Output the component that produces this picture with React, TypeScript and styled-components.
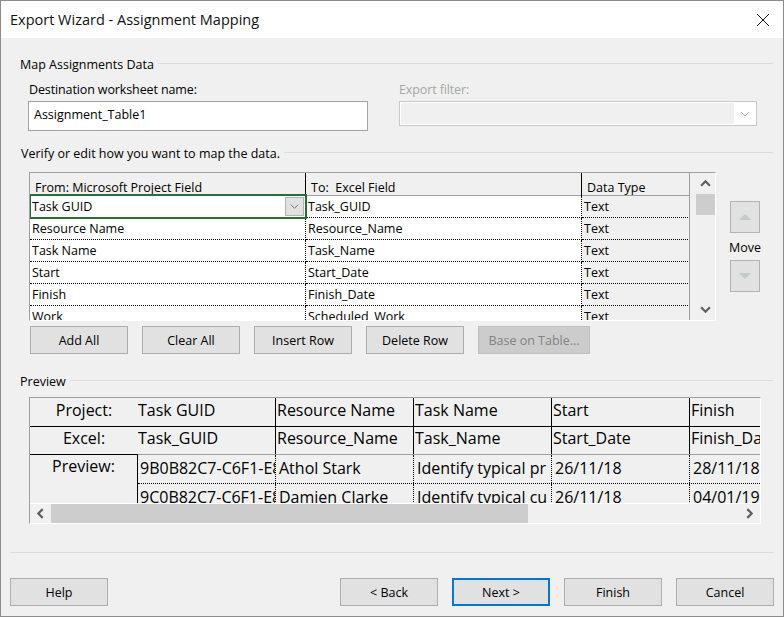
import React from "react";
import styled, { createGlobalStyle } from "styled-components";

const GlobalStyle = createGlobalStyle`
  html, body {
    margin: 0;
    padding: 0;
    background: #f0f0f0;
  }
  * {
    box-sizing: border-box;
  }
`;

const Window = styled.div`
  width: 784px;
  height: 617px;
  border: 1px solid #8c8c8c;
  background: #f0f0f0;
  color: #000;
  font-family: "Open Sans", "Noto Sans", sans-serif;
  font-size: 12.5px;
  overflow: hidden;
  display: flex;
  flex-direction: column;
`;

const TitleBar = styled.div`
  height: 37px;
  flex: none;
  background: #fff;
  display: flex;
  align-items: center;
  justify-content: space-between;
  padding: 0 14px 0 9px;
  font-size: 14.5px;
  color: #111;
`;

const Body = styled.div`
  flex: 1;
  display: flex;
  flex-direction: column;
  padding: 0 9px 0 9px;
`;

const GroupHead = styled.div<{ $top: number; $left?: number }>`
  display: flex;
  align-items: center;
  gap: 4px;
  height: 16px;
  margin: ${(p) => p.$top}px 1px 0 ${(p) => p.$left ?? 10}px;
  white-space: nowrap;
  &::after {
    content: "";
    flex: 1;
    height: 1px;
    margin-top: -2px;
    background: #dcdcdc;
  }
`;

const FieldRow = styled.div`
  display: flex;
  margin: 10px 0 0 18px;
`;

const Field = styled.div<{ $width: number; $left?: number; $disabled?: boolean }>`
  width: ${(p) => p.$width}px;
  margin-left: ${(p) => p.$left ?? 0}px;
  color: ${(p) => (p.$disabled ? "#a6a6a6" : "inherit")};
`;

const FieldLabel = styled.div<{ $flush?: boolean }>`
  height: 16px;
  line-height: 16px;
  padding-left: ${(p) => (p.$flush ? 0 : 1)}px;
  margin-bottom: 3px;
  letter-spacing: -0.12px;
`;

const TextInput = styled.div`
  height: 30px;
  background: #fff;
  border: 1px solid #a3a3a3;
  padding-left: 5px;
  line-height: 26px;
`;

const DisabledSelect = styled.div`
  height: 25px;
  margin-top: 1px;
  background: #fff;
  border: 1px solid #c8c8c8;
  padding: 1px 0 1px 1px;
  display: flex;
  align-items: center;
`;

const DisabledSelectFill = styled.div`
  flex: 1;
  height: 100%;
  background: #f0f0f0;
`;

const DisabledSelectArrow = styled.div`
  width: 22px;
  display: flex;
  justify-content: center;
  color: #b8b8b8;
`;

const MappingRow = styled.div`
  display: flex;
  margin: 11px 0 0 19px;
`;

const MappingGrid = styled.div`
  width: 687px;
  height: 149px;
  flex: none;
  display: flex;
  border-top: 1px solid #a0a0a0;
  border-left: 1px solid #a0a0a0;
  border-right: 1px solid #fff;
  border-bottom: 1px solid #fff;
`;

const MappingTable = styled.div`
  width: 660px;
  flex: none;
  border-right: 1px solid #a0a0a0;
  overflow: hidden;
`;

const MappingHeader = styled.div`
  display: grid;
  grid-template-columns: 276px 276px 108px;
  height: 23px;
  border-bottom: 1px solid #a0a0a0;
  margin-right: -1px;
`;

const HeaderCell = styled.div`
  border-right: 1px solid #000;
  padding: 6px 0 0 5px;
  line-height: 17px;
  white-space: pre;
`;

const MappingBody = styled.div`
  height: 127px;
  margin-top: -2px;
  padding-top: 2px;
  overflow: hidden;
  position: relative;
`;

const MappingLine = styled.div`
  display: grid;
  grid-template-columns: 276px 276px 108px;
  height: 22px;
`;

const MappingCell = styled.div<{ $shaded?: boolean; $last?: boolean }>`
  background: ${(p) => (p.$shaded ? "#f0f0f0" : "#fff")};
  border-bottom: 1px dotted #000;
  border-right: ${(p) => (p.$last ? "0" : "1px dotted #000")};
  padding-left: 2px;
  line-height: 21px;
  white-space: nowrap;
  overflow: hidden;
`;

const SelectedCell = styled.div`
  position: relative;
  background: #fff;
  padding: 0 2px 1px 2px;
  display: flex;
  align-items: center;
  justify-content: space-between;
  white-space: nowrap;
  &::after {
    content: "";
    position: absolute;
    top: -2px;
    left: 0;
    right: -1px;
    bottom: -1px;
    border: 2px solid #2b6e35;
    border-left-width: 1px;
    pointer-events: none;
  }
`;

const ComboButton = styled.div`
  width: 19px;
  height: 19px;
  background: #e1e1e1;
  border: 1px solid #b4b4b4;
  display: flex;
  align-items: center;
  justify-content: center;
  color: #666;
`;

const VScroll = styled.div`
  flex: 1;
  display: flex;
  flex-direction: column;
  padding-left: 6px;
`;

const ArrowSlot = styled.div<{ $height: number; $width?: number }>`
  height: ${(p) => p.$height}px;
  width: ${(p) => (p.$width ? `${p.$width}px` : "auto")};
  flex: none;
  display: flex;
  align-items: center;
  justify-content: center;
  color: #605e60;
`;

const VThumb = styled.div`
  height: 21px;
  flex: none;
  background: #cdcdcd;
`;

const VTrack = styled.div`
  flex: 1;
`;

const MoveColumn = styled.div`
  width: 34px;
  margin: 29px 0 0 14px;
  display: flex;
  flex-direction: column;
`;

const MoveButton = styled.div`
  width: 30px;
  height: 32px;
  background: #e1e1e1;
  border: 1px solid #b4b4b4;
  display: flex;
  align-items: center;
  justify-content: center;
  color: #c2cbc8;
`;

const MoveLabel = styled.div`
  height: 27px;
  line-height: 29px;
  margin-left: -1px;
  white-space: nowrap;
`;

const ActionRow = styled.div`
  display: flex;
  gap: 14px;
  margin: 5px 0 0 20px;
`;

const PushButton = styled.div<{ $wide?: boolean; $disabled?: boolean; $primary?: boolean }>`
  width: ${(p) => (p.$wide ? 112 : 98)}px;
  height: 28px;
  flex: none;
  display: flex;
  align-items: center;
  justify-content: center;
  background: ${(p) => (p.$disabled ? "#cccccc" : "#e1e1e1")};
  border: ${(p) =>
    p.$primary ? "2px solid #0078d7" : `1px solid ${p.$disabled ? "#bfbfbf" : "#adadad"}`};
  color: ${(p) => (p.$disabled ? "#838383" : "#000")};
`;

const PreviewFrame = styled.div`
  width: 732px;
  height: 127px;
  margin: 8px 0 0 19px;
  border-top: 1px solid #a0a0a0;
  border-left: 1px solid #a0a0a0;
  border-right: 1px solid #fff;
  border-bottom: 1px solid #fff;
  font-size: 16px;
  display: flex;
  flex-direction: column;
`;

const PreviewTable = styled.div`
  height: 105px;
  flex: none;
  overflow: hidden;
`;

const PreviewHeadRow = styled.div<{ $height: number; $line: number }>`
  display: grid;
  grid-template-columns: 107px 139px 138px 138px 138px 100px;
  height: ${(p) => p.$height}px;
  line-height: ${(p) => p.$line}px;
  border-bottom: 1px solid #000;
  white-space: nowrap;
`;

const RowTitle = styled.div`
  text-align: center;
  padding-left: 1px;
`;

const HeadCell = styled.div<{ $last?: boolean }>`
  padding-left: 1px;
  border-right: ${(p) => (p.$last ? "0" : "1px solid #000")};
  overflow: hidden;
`;

const PreviewRows = styled.div`
  display: flex;
  margin-top: -1px;
  height: 60px;
`;

const PreviewTitleCell = styled.div`
  width: 108px;
  flex: none;
  border-top: 1px solid #000;
  border-right: 1px solid #000;
  text-align: center;
  line-height: 22px;
  height: 50px;
`;

const PreviewData = styled.div`
  flex: 1;
  min-width: 0;
  border-top: 1px solid #a0a0a0;
`;

const PreviewLine = styled.div`
  display: grid;
  grid-template-columns: 138px 138px 138px 138px 100px;
  height: 29px;
  border-bottom: 1px dotted #000;
  white-space: nowrap;
`;

const PreviewCell = styled.div<{ $last?: boolean; $first?: boolean }>`
  border-right: ${(p) => (p.$last ? "0" : "1px dotted #000")};
  padding-left: ${(p) => (p.$first ? 2 : 3)}px;
  line-height: 26px;
  overflow: hidden;
`;

const HScroll = styled.div`
  height: 20px;
  flex: none;
  display: flex;
  border-top: 1px solid #fff;
`;

const HThumb = styled.div`
  width: 477px;
  flex: none;
  background: #cdcdcd;
`;

const HTrack = styled.div`
  flex: 1;
`;

const Divider = styled.div`
  height: 1px;
  margin: 28px 0 0 0;
  background: #dcdcdc;
`;

const Footer = styled.div`
  display: flex;
  gap: 14px;
  margin-top: 25px;
`;

const Spacer = styled.div`
  flex: 1;
`;

const CloseIcon = () => (
  <svg width="12" height="12" viewBox="0 0 12 12">
    <path d="M0 0L12 12M12 0L0 12" stroke="#111" strokeWidth="1" fill="none" />
  </svg>
);

const Chevron = ({ dir, size = 8, weight = 2 }: { dir: "up" | "down" | "left" | "right"; size?: number; weight?: number }) => {
  const d = {
    up: "M1 7L5 3L9 7",
    down: "M1 3L5 7L9 3",
    left: "M7 1L3 5L7 9",
    right: "M3 1L7 5L3 9",
  }[dir];
  return (
    <svg width={size} height={size} viewBox="0 0 10 10">
      <path d={d} stroke="currentColor" strokeWidth={weight} fill="none" />
    </svg>
  );
};

const Triangle = ({ up }: { up?: boolean }) => (
  <svg width="12" height="6" viewBox="0 0 12 6">
    <path d={up ? "M0 6L6 0L12 6Z" : "M0 0L6 6L12 0Z"} fill="currentColor" />
  </svg>
);

const mappingRows = [
  ["Resource Name", "Resource_Name", "Text"],
  ["Task Name", "Task_Name", "Text"],
  ["Start", "Start_Date", "Text"],
  ["Finish", "Finish_Date", "Text"],
  ["Work", "Scheduled_Work", "Text"],
];

const previewRows = [
  ["9B0B82C7-C6F1-E8", "Athol Stark", "Identify typical pr", "26/11/18", "28/11/18"],
  ["9C0B82C7-C6F1-E8", "Damien Clarke", "Identify typical cu", "26/11/18", "04/01/19"],
];

export default function App() {
  return (
    <>
      <GlobalStyle />
      <Window>
        <TitleBar>
          <span>Export Wizard - Assignment Mapping</span>
          <CloseIcon />
        </TitleBar>
        <Body>
          <GroupHead $top={18}>Map Assignments Data</GroupHead>
          <FieldRow>
            <Field $width={340}>
              <FieldLabel>Destination worksheet name:</FieldLabel>
              <TextInput>Assignment_Table1</TextInput>
            </Field>
            <Field $width={358} $left={31} $disabled>
              <FieldLabel $flush>Export filter:</FieldLabel>
              <DisabledSelect>
                <DisabledSelectFill />
                <DisabledSelectArrow>
                  <Chevron dir="down" size={10} weight={1} />
                </DisabledSelectArrow>
              </DisabledSelect>
            </Field>
          </FieldRow>
          <GroupHead $top={14} $left={11}>Verify or edit how you want to map the data.</GroupHead>
          <MappingRow>
            <MappingGrid>
              <MappingTable>
                <MappingHeader>
                  <HeaderCell>From: Microsoft Project Field</HeaderCell>
                  <HeaderCell>To:  Excel Field</HeaderCell>
                  <HeaderCell>Data Type</HeaderCell>
                </MappingHeader>
                <MappingBody>
                  <MappingLine>
                    <SelectedCell>
                      Task GUID
                      <ComboButton>
                        <Chevron dir="down" size={9} weight={1} />
                      </ComboButton>
                    </SelectedCell>
                    <MappingCell>Task_GUID</MappingCell>
                    <MappingCell $shaded $last>Text</MappingCell>
                  </MappingLine>
                  {mappingRows.map((row) => (
                    <MappingLine key={row[0]}>
                      <MappingCell>{row[0]}</MappingCell>
                      <MappingCell>{row[1]}</MappingCell>
                      <MappingCell $shaded $last>{row[2]}</MappingCell>
                    </MappingLine>
                  ))}
                </MappingBody>
              </MappingTable>
              <VScroll>
                <ArrowSlot $height={21}>
                  <Chevron dir="up" size={11} />
                </ArrowSlot>
                <VThumb />
                <VTrack />
                <ArrowSlot $height={21}>
                  <Chevron dir="down" size={11} />
                </ArrowSlot>
              </VScroll>
            </MappingGrid>
            <MoveColumn>
              <MoveButton>
                <Triangle up />
              </MoveButton>
              <MoveLabel>Move</MoveLabel>
              <MoveButton>
                <Triangle />
              </MoveButton>
            </MoveColumn>
          </MappingRow>
          <ActionRow>
            <PushButton>Add All</PushButton>
            <PushButton>Clear All</PushButton>
            <PushButton>Insert Row</PushButton>
            <PushButton>Delete Row</PushButton>
            <PushButton $wide $disabled>Base on Table...</PushButton>
          </ActionRow>
          <GroupHead $top={19}>Preview</GroupHead>
          <PreviewFrame>
            <PreviewTable>
              <PreviewHeadRow $height={29} $line={24}>
                <RowTitle>Project:</RowTitle>
                <HeadCell>Task GUID</HeadCell>
                <HeadCell>Resource Name</HeadCell>
                <HeadCell>Task Name</HeadCell>
                <HeadCell>Start</HeadCell>
                <HeadCell $last>Finish</HeadCell>
              </PreviewHeadRow>
              <PreviewHeadRow $height={28} $line={22}>
                <RowTitle>Excel:</RowTitle>
                <HeadCell>Task_GUID</HeadCell>
                <HeadCell>Resource_Name</HeadCell>
                <HeadCell>Task_Name</HeadCell>
                <HeadCell>Start_Date</HeadCell>
                <HeadCell $last>Finish_Date</HeadCell>
              </PreviewHeadRow>
              <PreviewRows>
                <PreviewTitleCell>Preview:</PreviewTitleCell>
                <PreviewData>
                  {previewRows.map((row) => (
                    <PreviewLine key={row[0]}>
                      {row.map((cell, i) => (
                        <PreviewCell key={i} $first={i === 0} $last={i === row.length - 1}>{cell}</PreviewCell>
                      ))}
                    </PreviewLine>
                  ))}
                </PreviewData>
              </PreviewRows>
            </PreviewTable>
            <HScroll>
              <ArrowSlot $height={19} $width={21}>
                <Chevron dir="left" size={11} />
              </ArrowSlot>
              <HThumb />
              <HTrack />
              <ArrowSlot $height={19} $width={21}>
                <Chevron dir="right" size={11} />
              </ArrowSlot>
            </HScroll>
          </PreviewFrame>
          <Divider />
          <Footer>
            <PushButton>Help</PushButton>
            <Spacer />
            <PushButton>&lt; Back</PushButton>
            <PushButton $primary>Next &gt;</PushButton>
            <PushButton>Finish</PushButton>
            <PushButton>Cancel</PushButton>
          </Footer>
        </Body>
      </Window>
    </>
  );
}
